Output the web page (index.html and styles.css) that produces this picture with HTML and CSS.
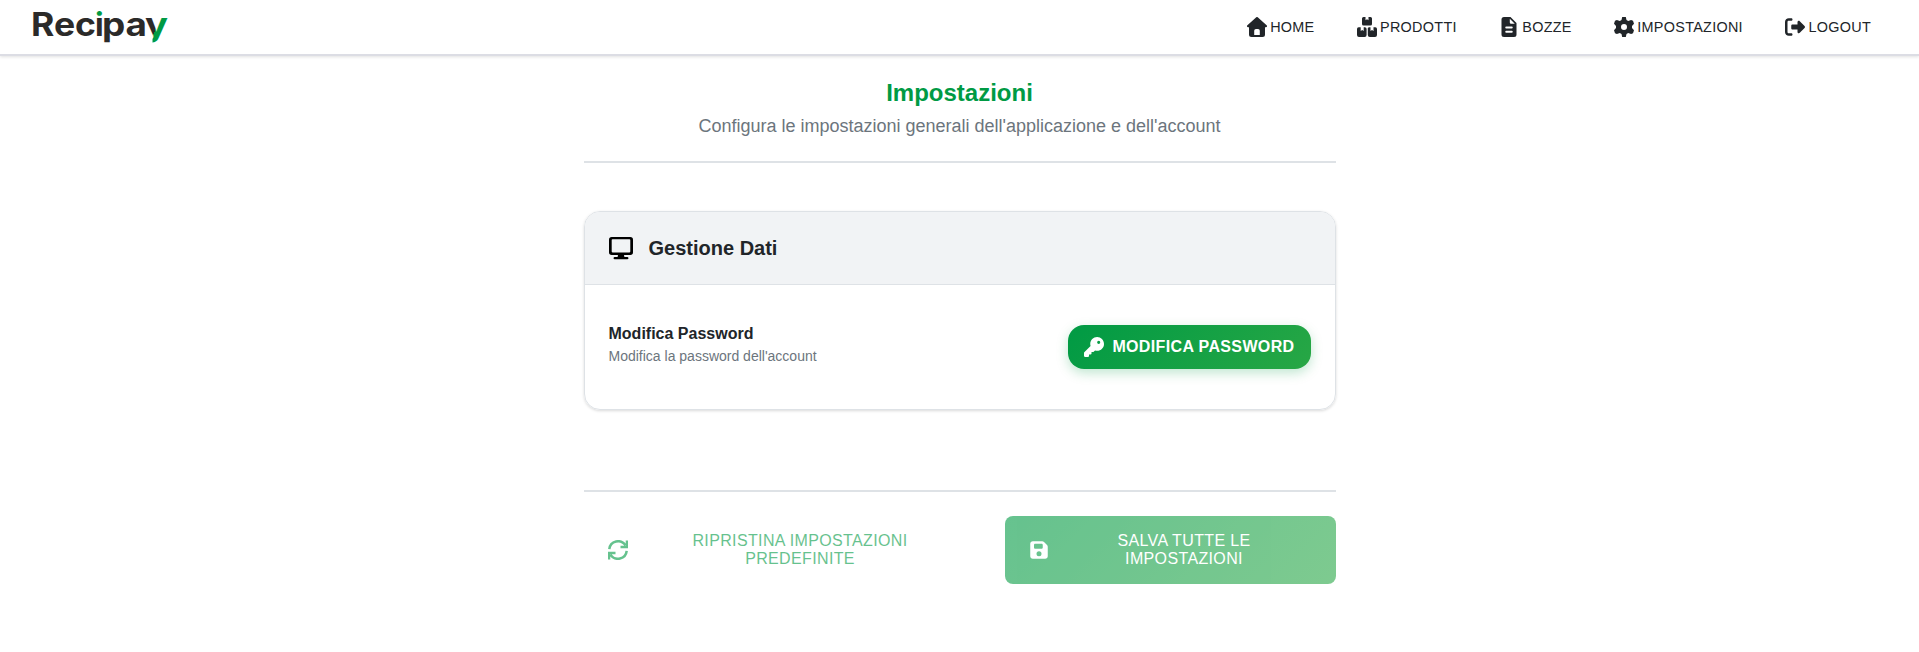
FILE: index.html
```html
<!DOCTYPE html>
<html lang="it">
<head>
<meta charset="utf-8">
<title>Recipay - Impostazioni</title>
<link rel="stylesheet" href="styles.css">
</head>
<body>
<header class="navbar">
  <a class="brand" aria-label="Recipay">
    <svg class="logo" width="140" height="46" viewBox="0 0 140 46">
      <defs>
        <linearGradient id="dot" gradientUnits="userSpaceOnUse" x1="0" y1="0" x2="0" y2="46">
          <stop offset="0.28" stop-color="#009a44"/><stop offset="0.28" stop-color="#2b2a29"/>
        </linearGradient>
        <linearGradient id="stroke" gradientUnits="userSpaceOnUse" x1="113.3" y1="19.8" x2="136.3" y2="29.2">
          <stop offset="0.5" stop-color="#2b2a29"/><stop offset="0.5" stop-color="#009a44"/>
        </linearGradient>
        <clipPath id="tail"><path d="M0 0H140V46H121.500V33H108V46H0z"/></clipPath>
      </defs>
      <g clip-path="url(#tail)"><text class="logo-text" y="32"><tspan x="0" textLength="65" lengthAdjust="spacingAndGlyphs">Rec</tspan><tspan x="64" fill="url(#dot)">i</tspan><tspan x="71" textLength="45" lengthAdjust="spacingAndGlyphs">pa</tspan><tspan x="114" textLength="23" lengthAdjust="spacingAndGlyphs" fill="url(#stroke)">y</tspan></text></g>
    </svg>
  </a>
  <nav class="menu">
    <a class="menu-item"><svg class="icon" viewBox="0 0 20 20"><path fill-rule="evenodd" d="M9 .4a1.500 1.500 0 0 1 2 0l8.600 7.800c.9.900.4 2.100-.7 2.100H18V17.500a2.500 2.500 0 0 1-2.500 2.500h-11A2.500 2.500 0 0 1 2 17.500V10.300H1.100C0 10.300-.5 9.100.4 8.200zM9 12a1.800 1.800 0 0 0-1.800 1.800V18.100h5.600V13.800A1.800 1.800 0 0 0 11 12z"/></svg><span>HOME</span></a>
    <a class="menu-item"><svg class="icon" viewBox="0 0 20 20"><path d="M6.500 0H8.500V3.200L10 2.300l1.500.9V0H13.500A1.500 1.500 0 0 1 15 1.500V7a1.500 1.500 0 0 1-1.500 1.500h-7A1.500 1.500 0 0 1 5 7V1.500A1.500 1.500 0 0 1 6.500 0zM2 10.200H3.700V14l1.500-.9 1.500.9V10.200H7.800a1.800 1.800 0 0 1 1.800 1.800v6a2 2 0 0 1-2 2H2a2 2 0 0 1-2-2V12a1.800 1.800 0 0 1 2-1.800zM12 10.200h1.500V14l1.500-.9 1.500.9V10.200H18A1.800 1.800 0 0 1 20 12v6a2 2 0 0 1-2 2H12.800a2 2 0 0 1-2-2V12A1.500 1.500 0 0 1 12 10.200z"/></svg><span>PRODOTTI</span></a>
    <a class="menu-item"><svg class="icon" viewBox="0 0 20 20"><path fill-rule="evenodd" d="M5 0h6.500L17.500 6V17.500A2.500 2.500 0 0 1 15 20H5a2.500 2.500 0 0 1-2.500-2.500v-15A2.500 2.500 0 0 1 5 0zM10.800 1.800V5.500a1.300 1.300 0 0 0 1.300 1.300h3.700zM7.200 9.600a.9.900 0 0 0 0 1.900h5.600a.9.900 0 0 0 0-1.900zM7.200 13.800a.9.900 0 0 0 0 1.900h5.600a.9.900 0 0 0 0-1.900z"/></svg><span>BOZZE</span></a>
    <a class="menu-item"><svg class="icon" viewBox="0 0 20 20"><path fill-rule="evenodd" d="M8.200 0h3.600l.7 2.900 1.700 1 2.900-.9 1.900.8 1 3L18 8.900v2.200l2 2.100-1 3-1.900.8-2.900-.9-1.700 1-.7 2.900H8.200l-.7-2.900-1.700-1-2.900.9L1 16.200l-1-3 2-2.100V8.900L0 6.800l1-3L2.900 3l2.900.9 1.700-1zM10 7a3 3 0 1 0 0 6 3 3 0 1 0 0-6z"/></svg><span>IMPOSTAZIONI</span></a>
    <a class="menu-item"><svg class="icon" viewBox="0 0 512 512"><path d="M377.900 105.900L500.700 228.700c7.200 7.200 11.300 17.100 11.300 27.300s-4.100 20.100-11.300 27.300L377.900 406.100c-6.400 6.400-15 9.900-24 9.900c-18.700 0-33.900-15.200-33.900-33.900V320H192c-17.700 0-32-14.300-32-32V224c0-17.700 14.300-32 32-32H320V129.900c0-18.700 15.200-33.900 33.900-33.900c9 0 17.600 3.600 24 9.900zM160 96H96c-17.700 0-32 14.300-32 32V384c0 17.700 14.300 32 32 32h64c17.700 0 32 14.300 32 32s-14.300 32-32 32H96c-53 0-96-43-96-96V128C0 75 43 32 96 32h64c17.700 0 32 14.300 32 32s-14.300 32-32 32z"/></svg><span>LOGOUT</span></a>
  </nav>
</header>
<main class="page">
  <div class="page-header">
    <h1 class="page-title">Impostazioni</h1>
    <p class="page-subtitle">Configura le impostazioni generali dell'applicazione e dell'account</p>
  </div>
  <section class="card">
    <div class="card-header">
      <svg class="icon-lg" viewBox="0 0 24 24"><path fill-rule="evenodd" d="M2.700 1H21.300A2.700 2.700 0 0 1 24 3.700V16.300A2.700 2.700 0 0 1 21.300 19H15l.4 2H18.300a1 1 0 0 1 0 2.300H5.700a1 1 0 0 1 0-2.300H8.600L9 19H2.700A2.700 2.700 0 0 1 0 16.300V3.700A2.700 2.700 0 0 1 2.700 1zM3.500 3.300a.8.800 0 0 0-.8.800V15.600a.8.800 0 0 0 .8.800H20.500a.8.800 0 0 0 .8-.8V4.100a.8.800 0 0 0-.8-.8z"/></svg>
      <h2 class="card-title">Gestione Dati</h2>
    </div>
    <div class="card-body">
      <div class="setting">
        <div class="setting-name">Modifica Password</div>
        <div class="setting-desc">Modifica la password dell'account</div>
      </div>
      <button class="btn-password"><svg class="icon" viewBox="0 0 512 512"><path d="M336 352c97.200 0 176-78.800 176-176S433.200 0 336 0S160 78.800 160 176c0 18.700 2.900 36.800 8.300 53.700L7 391c-4.500 4.500-7 10.600-7 17v80c0 13.300 10.700 24 24 24h80c13.300 0 24-10.700 24-24V448h40c13.300 0 24-10.700 24-24V384h40c6.400 0 12.500-2.500 17-7l33.300-33.300c16.900 5.400 35 8.300 53.700 8.300zM376 96a40 40 0 1 1 0 80 40 40 0 1 1 0-80z"/></svg><span>MODIFICA PASSWORD</span></button>
    </div>
  </section>
  <div class="actions">
    <button class="btn btn-reset" disabled><svg class="icon icon-line" viewBox="0 0 20 20"><path d="M1.300 9.200A8.800 8.800 0 0 1 17.500 5.400M19 .6V7H12.500M18.700 10.800A8.800 8.800 0 0 1 2.500 14.600M1 19.400V13H7.500"/></svg><span class="btn-label">RIPRISTINA IMPOSTAZIONI<br>PREDEFINITE</span></button>
    <button class="btn btn-save" disabled><svg class="icon" viewBox="0 0 448 512"><path d="M64 32C28.700 32 0 60.700 0 96V416c0 35.300 28.700 64 64 64H384c35.300 0 64-28.700 64-64V173.300c0-17-6.700-33.300-18.700-45.300L352 50.700C340 38.700 323.700 32 306.700 32H64zm32 96c0-17.700 14.300-32 32-32H288c17.700 0 32 14.300 32 32v64c0 17.700-14.300 32-32 32H128c-17.700 0-32-14.300-32-32V128zM224 288a64 64 0 1 1 0 128 64 64 0 1 1 0-128z"/></svg><span class="btn-label">SALVA TUTTE LE<br>IMPOSTAZIONI</span></button>
  </div>
</main>
</body>
</html>
```
FILE: styles.css
```css
* { box-sizing: border-box; margin: 0; padding: 0; }
body { background: #fff; color: #212529; font-family: "Liberation Sans", Arial, sans-serif; }
.navbar { display: flex; justify-content: space-between; align-items: center; height: 56px; padding: 0 48px 0 31px; border-bottom: 2px solid #dcdde4; box-shadow: 0 1px 3px rgba(0, 0, 0, .12); }
.brand, .logo { display: block; }
.logo-text { font-family: Inter, sans-serif; font-weight: 700; font-size: 32px; fill: #2b2a29; }
.menu { display: flex; gap: 42px; }
.menu-item { display: flex; align-items: center; gap: 3.5px; font-size: 14.4px; letter-spacing: .3px; }
.icon { flex: none; width: 20px; height: 20px; fill: currentColor; }
.icon-line { fill: none; stroke: currentColor; stroke-width: 2.5; }
.page { width: 752px; margin: 0 auto; padding-top: 22px; }
.page-header { height: 85px; border-bottom: 2px solid #dee2e6; text-align: center; }
.page-title { color: #009a44; font-size: 24px; line-height: 29px; }
.page-subtitle { margin-top: 8px; color: #6c757d; font-size: 18px; line-height: 22px; }
.card { margin-top: 48px; border: 1px solid #dee2e6; border-radius: 16px; box-shadow: 0 1px 3px rgba(0, 0, 0, .15); overflow: hidden; }
.card-header { display: flex; align-items: center; gap: 16px; height: 73px; padding: 0 24px; background: #f1f3f5; border-bottom: 1px solid #dee2e6; }
.icon-lg { width: 24px; height: 24px; fill: #000; }
.card-title { font-size: 20px; line-height: 24px; }
.card-body { display: flex; justify-content: space-between; align-items: center; height: 124px; padding: 0 24px; }
.setting { padding-bottom: 6px; }
.setting-name { font-size: 16px; font-weight: 700; line-height: 20px; }
.setting-desc { margin-top: 3px; color: #6c757d; font-size: 14px; line-height: 18px; }
.btn-password { display: flex; align-items: center; gap: 8px; height: 44px; padding: 0 16px; border: 0; border-radius: 16px; background: linear-gradient(135deg, #009a44, #28a745); box-shadow: 0 4px 12px rgba(0, 154, 68, .25); color: #fff; font: 700 16px "Liberation Sans", Arial, sans-serif; letter-spacing: .36px; }
.actions { display: flex; gap: 16px; margin-top: 80px; padding-top: 24px; border-top: 2px solid #dee2e6; }
.btn { display: flex; align-items: center; gap: 8px; height: 68px; padding: 0 24px; border: 0; border-radius: 8px; font: 400 16px/18px "Liberation Sans", Arial, sans-serif; letter-spacing: .36px; opacity: .6; }
.btn-label { flex: 1; text-align: center; }
.btn-reset { flex: 1; background: transparent; color: #009a44; }
.btn-save { width: 331px; background: linear-gradient(135deg, #009a44, #28a745); color: #fff; }
```
